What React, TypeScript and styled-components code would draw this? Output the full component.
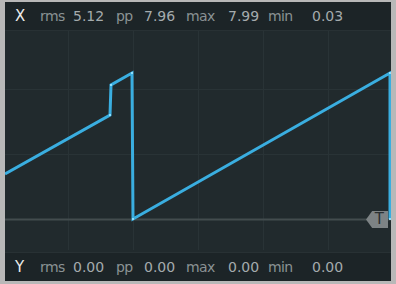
import styled, { createGlobalStyle } from 'styled-components';

const GlobalStyle = createGlobalStyle`
    html, body {
        margin: 0;
        padding: 0;
        background: #ffffff;
    }
    #root {
        width: 396px;
        height: 284px;
    }
`;

interface Stat {
    label: string;
    value: string;
}

const xStats: Stat[] = [
    { label: 'rms', value: '5.12' },
    { label: 'pp', value: '7.96' },
    { label: 'max', value: '7.99' },
    { label: 'min', value: '0.03' },
];

const yStats: Stat[] = [
    { label: 'rms', value: '0.00' },
    { label: 'pp', value: '0.00' },
    { label: 'max', value: '0.00' },
    { label: 'min', value: '0.00' },
];

// sawtooth trace, in plot coordinates
const wave: [number, number][] = [
    [0, 143],
    [105, 84],
    [106, 54],
    [127, 42],
    [128, 188],
    [385, 42],
    [385, 188],
];

const gridX = [63, 128, 193, 258, 323];
const gridY = [58, 123];

const StatRow = ({ axis, stats }: { axis: string; stats: Stat[] }) => (
    <Readout>
        <Axis>{axis}</Axis>
        {stats.map((s) => [
            <Label key={s.label + 'l'}>{s.label}</Label>,
            <Value key={s.label + 'v'}>{s.value}</Value>,
        ])}
    </Readout>
);

const App = () => {
    const points = wave.map(([x, y]) => `${x},${y}`).join(' ');

    return (
        <>
            <GlobalStyle />
            <Frame>
                <StatRow axis='X' stats={xStats} />
                <Plot>
                    <svg width='386' height='219' viewBox='0 0 386 219'>
                        {gridX.map((x) => (
                            <line key={x} x1={x + 0.5} y1={0} x2={x + 0.5} y2={219} stroke='#293336' strokeWidth={1} />
                        ))}
                        {gridY.map((y) => (
                            <line key={y} x1={0} y1={y + 0.5} x2={386} y2={y + 0.5} stroke='#293336' strokeWidth={1} />
                        ))}
                        <line x1={0} y1={188.5} x2={386} y2={188.5} stroke='#434c4e' strokeWidth={2} />
                        <polyline
                            points={points}
                            fill='none'
                            stroke='#3aaee0'
                            strokeWidth={3}
                            strokeLinejoin='miter'
                        />
                        {wave.slice(1).map(([x, y]) => (
                            <rect key={`${x}-${y}`} x={x - 1} y={y - 1} width={2} height={2} fill='#8ee0ff' />
                        ))}
                    </svg>
                    <TriggerMark>T</TriggerMark>
                </Plot>
                <StatRow axis='Y' stats={yStats} />
            </Frame>
        </>
    );
};

const Frame = styled.div`
    box-sizing: border-box;
    width: 396px;
    height: 284px;
    display: flex;
    flex-direction: column;
    background: #1d2528;
    border-style: solid;
    border-color: #b8b8b8;
    border-width: 2px 5px 3px 5px;
    font-family: 'DejaVu Sans', 'Liberation Sans', sans-serif;
`;

const Readout = styled.div`
    height: 28px;
    display: grid;
    grid-template-columns: 25px 33px 43px 28px 42px 42px 40px 44px 1fr;
    align-items: center;
    padding-left: 10px;
    background: #1c2427;
    font-size: 14px;
    line-height: 1;
`;

const Axis = styled.span`
    color: #ececec;
    font-size: 15px;
`;

const Label = styled.span`
    color: #8a9294;
    letter-spacing: -0.6px;
`;

const Value = styled.span`
    color: #a4abad;
`;

const Plot = styled.div`
    position: relative;
    flex: 1;
    background: #212a2d;
    border-top: 1px solid #283134;
    border-bottom: 1px solid #283134;
    overflow: hidden;

    svg {
        display: block;
    }
`;

const TriggerMark = styled.div`
    position: absolute;
    left: 361px;
    top: 180px;
    width: 22px;
    height: 17px;
    background: #7d8385;
    clip-path: polygon(0 50%, 28% 0, 100% 0, 100% 100%, 28% 100%);
    color: #2a3032;
    font-size: 15px;
    line-height: 17px;
    text-align: right;
    padding-right: 4px;
    box-sizing: border-box;
`;

export default App;
